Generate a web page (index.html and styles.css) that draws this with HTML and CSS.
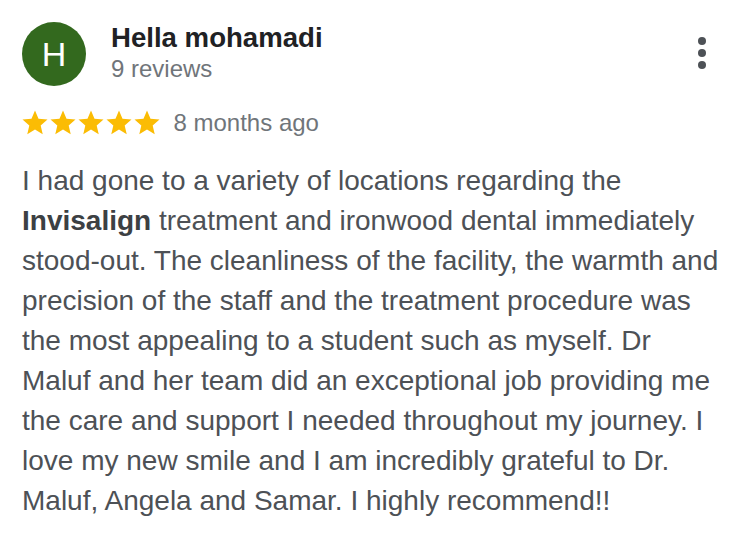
FILE: index.html
```html
<!DOCTYPE html>
<html>
<head>
<meta charset="utf-8">
<link rel="stylesheet" href="styles.css">
</head>
<body>
<div class="review">
  <div class="header">
    <div class="avatar">H</div>
    <div class="who">
      <div class="name">Hella mohamadi</div>
      <div class="count">9 reviews</div>
    </div>
    <div class="more"><span></span><span></span><span></span></div>
  </div>
  <div class="rating">
    <div class="stars">
      <svg viewBox="0 0 24 24" class="star"><path d="M12 17.27L18.18 21l-1.64-7.03L22 9.24l-7.19-.61L12 2 9.19 8.63 2 9.24l5.46 4.73L5.82 21z"/></svg>
      <svg viewBox="0 0 24 24" class="star"><path d="M12 17.27L18.18 21l-1.64-7.03L22 9.24l-7.19-.61L12 2 9.19 8.63 2 9.24l5.46 4.73L5.82 21z"/></svg>
      <svg viewBox="0 0 24 24" class="star"><path d="M12 17.27L18.18 21l-1.64-7.03L22 9.24l-7.19-.61L12 2 9.19 8.63 2 9.24l5.46 4.73L5.82 21z"/></svg>
      <svg viewBox="0 0 24 24" class="star"><path d="M12 17.27L18.18 21l-1.64-7.03L22 9.24l-7.19-.61L12 2 9.19 8.63 2 9.24l5.46 4.73L5.82 21z"/></svg>
      <svg viewBox="0 0 24 24" class="star"><path d="M12 17.27L18.18 21l-1.64-7.03L22 9.24l-7.19-.61L12 2 9.19 8.63 2 9.24l5.46 4.73L5.82 21z"/></svg>
    </div>
    <span class="date">8 months ago</span>
  </div>
  <p class="text">I had gone to a variety of locations regarding the <b>Invisalign</b> treatment and ironwood dental immediately stood-out. The cleanliness of the facility, the warmth and precision of the staff and the treatment procedure was the most appealing to a student such as myself. Dr Maluf and her team did an exceptional job providing me the care and support I needed throughout my journey. I love my new smile and I am incredibly grateful to Dr. Maluf, Angela and Samar. I highly recommend!!</p>
</div>
</body>
</html>
```
FILE: styles.css
```css
html, body {
  margin: 0;
  padding: 0;
  background: #fff;
}
body {
  font-family: "Liberation Sans", Arial, sans-serif;
}
.review {
  padding: 22px 10px 0 22px;
}
.header {
  display: flex;
  align-items: flex-start;
}
.avatar {
  width: 64px;
  height: 64px;
  border-radius: 50%;
  background: #33691e;
  color: #fff;
  font-size: 34px;
  line-height: 64px;
  text-align: center;
  flex: none;
}
.who {
  margin-left: 25px;
  flex: 1;
}
.name {
  font-size: 27.6px;
  font-weight: bold;
  color: #202124;
  line-height: 32px;
}
.count {
  font-size: 24px;
  color: #70757a;
  line-height: 30px;
}
.more {
  display: flex;
  flex-direction: column;
  gap: 4px;
  margin-top: 15px;
  margin-right: 15px;
}
.more span {
  width: 8px;
  height: 8px;
  border-radius: 50%;
  background: #4d5156;
}
.rating {
  display: flex;
  align-items: center;
  margin-top: 22px;
}
.stars {
  display: flex;
  margin-left: -2.5px;
}
.star {
  width: 30px;
  height: 30px;
  fill: #fbbc04;
  margin-right: -2px;
}
.stars .star:last-child {
  margin-right: 0;
}
.date {
  margin-left: 12px;
  font-size: 24px;
  color: #70757a;
}
.text {
  margin: 23px 0 0 0;
  font-size: 28px;
  line-height: 40px;
  color: #4d5156;
  width: 705px;
}
.text b {
  color: #3c4043;
  line-height: 1;
}
```
